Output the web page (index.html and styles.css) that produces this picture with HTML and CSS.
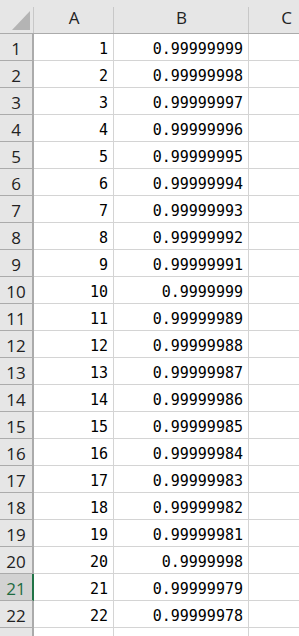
FILE: index.html
```html
<!DOCTYPE html>
<html lang="en">
<head>
<meta charset="utf-8">
<title>Sheet</title>
<link rel="stylesheet" href="styles.css">
</head>
<body>
<div class="sheet">
  <div class="corner"><span class="tri"></span></div>
  <div class="colhead">A</div>
  <div class="colhead">B</div>
  <div class="colhead">C</div>

  <div class="rowhead">1</div><div class="cell num">1</div><div class="cell num">0.99999999</div><div class="cell"></div>
  <div class="rowhead">2</div><div class="cell num">2</div><div class="cell num">0.99999998</div><div class="cell"></div>
  <div class="rowhead">3</div><div class="cell num">3</div><div class="cell num">0.99999997</div><div class="cell"></div>
  <div class="rowhead">4</div><div class="cell num">4</div><div class="cell num">0.99999996</div><div class="cell"></div>
  <div class="rowhead">5</div><div class="cell num">5</div><div class="cell num">0.99999995</div><div class="cell"></div>
  <div class="rowhead">6</div><div class="cell num">6</div><div class="cell num">0.99999994</div><div class="cell"></div>
  <div class="rowhead">7</div><div class="cell num">7</div><div class="cell num">0.99999993</div><div class="cell"></div>
  <div class="rowhead">8</div><div class="cell num">8</div><div class="cell num">0.99999992</div><div class="cell"></div>
  <div class="rowhead">9</div><div class="cell num">9</div><div class="cell num">0.99999991</div><div class="cell"></div>
  <div class="rowhead">10</div><div class="cell num">10</div><div class="cell num">0.9999999</div><div class="cell"></div>
  <div class="rowhead">11</div><div class="cell num">11</div><div class="cell num">0.99999989</div><div class="cell"></div>
  <div class="rowhead">12</div><div class="cell num">12</div><div class="cell num">0.99999988</div><div class="cell"></div>
  <div class="rowhead">13</div><div class="cell num">13</div><div class="cell num">0.99999987</div><div class="cell"></div>
  <div class="rowhead">14</div><div class="cell num">14</div><div class="cell num">0.99999986</div><div class="cell"></div>
  <div class="rowhead">15</div><div class="cell num">15</div><div class="cell num">0.99999985</div><div class="cell"></div>
  <div class="rowhead">16</div><div class="cell num">16</div><div class="cell num">0.99999984</div><div class="cell"></div>
  <div class="rowhead">17</div><div class="cell num">17</div><div class="cell num">0.99999983</div><div class="cell"></div>
  <div class="rowhead">18</div><div class="cell num">18</div><div class="cell num">0.99999982</div><div class="cell"></div>
  <div class="rowhead">19</div><div class="cell num">19</div><div class="cell num">0.99999981</div><div class="cell"></div>
  <div class="rowhead">20</div><div class="cell num">20</div><div class="cell num">0.9999998</div><div class="cell"></div>
  <div class="rowhead active">21</div><div class="cell num">21</div><div class="cell num">0.99999979</div><div class="cell"></div>
  <div class="rowhead">22</div><div class="cell num">22</div><div class="cell num">0.99999978</div><div class="cell"></div>
  <div class="rowhead">23</div><div class="cell num">23</div><div class="cell num">0.99999977</div><div class="cell"></div>
</div>
</body>
</html>
```
FILE: styles.css
```css
html, body {
  margin: 0;
  padding: 0;
  background: #ffffff;
  overflow: hidden;
}

.sheet {
  display: grid;
  grid-template-columns: 34px 80px 135px 75px;
  grid-template-rows: 34px;
  grid-auto-rows: 27px;
  width: 324px;
}

.corner,
.colhead {
  box-sizing: border-box;
  border-bottom: 1px solid #ababab;
  background: linear-gradient(#c8c8c8, #c8c8c8) no-repeat right bottom / 1px 26px, #e6e6e6;
}

.corner {
  position: relative;
}

.tri {
  position: absolute;
  left: 12px;
  top: 11px;
  width: 18px;
  height: 19px;
  background: #b4b4b4;
  clip-path: polygon(100% 0, 100% 100%, 0 100%);
}

.colhead {
  display: flex;
  align-items: flex-end;
  justify-content: center;
  padding-bottom: 7px;
  font-family: "Open Sans", "Noto Sans", sans-serif;
  font-size: 17px;
  line-height: 17px;
  color: #222222;
}

.rowhead {
  box-sizing: border-box;
  display: flex;
  align-items: flex-end;
  justify-content: center;
  padding-bottom: 3px;
  background: #e6e6e6;
  border-right: 2px solid #ababab;
  border-bottom: 1px solid #ababab;
  font-family: "Open Sans", "Noto Sans", sans-serif;
  font-size: 17px;
  line-height: 17px;
  color: #222222;
}

.rowhead.active {
  background: #d2d2d2;
  color: #1e6b41;
  border-right-color: #217346;
}

.cell {
  box-sizing: border-box;
  border-right: 1px solid #d4d4d4;
  border-bottom: 1px solid #d4d4d4;
  background: #ffffff;
}

.num {
  display: flex;
  align-items: flex-end;
  justify-content: flex-end;
  padding: 0 5px 3px 0;
  font-family: "DejaVu Sans Mono", "Liberation Mono", monospace;
  font-size: 15px;
  line-height: 15px;
  color: #000000;
}
```
